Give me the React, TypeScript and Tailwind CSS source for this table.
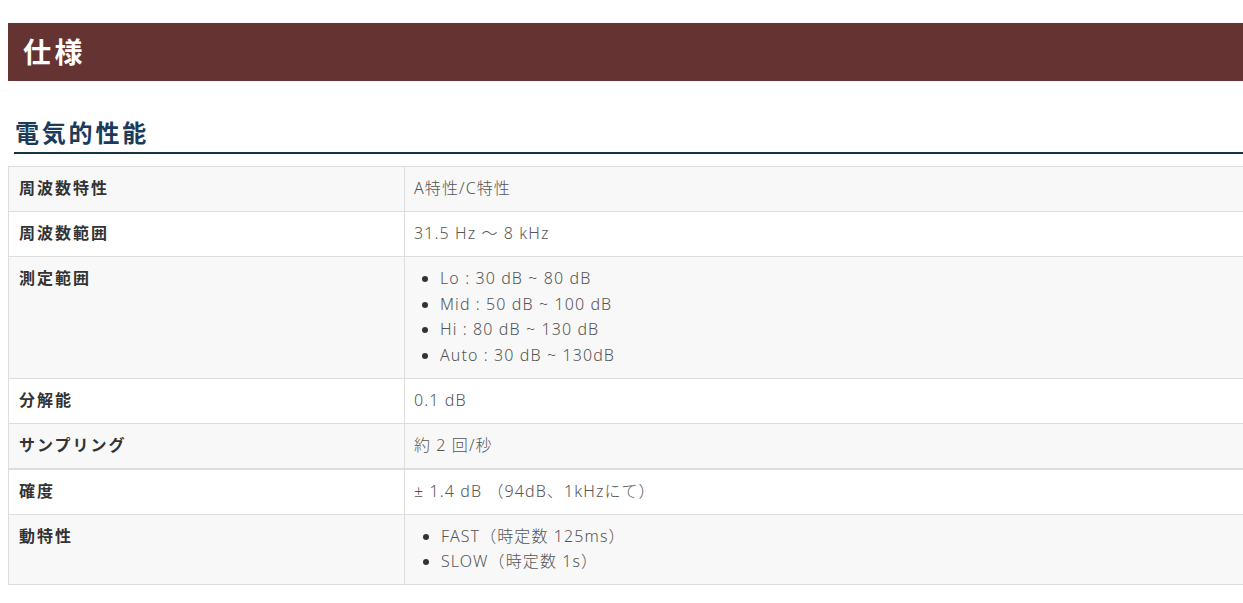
import React from 'react';

type Spec = { label: string; value: string | string[] };

const specs: Spec[] = [
  { label: '周波数特性', value: 'A特性/C特性' },
  { label: '周波数範囲', value: '31.5 Hz ～ 8 kHz' },
  {
    label: '測定範囲',
    value: ['Lo : 30 dB ~ 80 dB', 'Mid : 50 dB ~ 100 dB', 'Hi : 80 dB ~ 130 dB', 'Auto : 30 dB ~ 130dB'],
  },
  { label: '分解能', value: '0.1 dB' },
  { label: 'サンプリング', value: '約 2 回/秒' },
  { label: '確度', value: '± 1.4 dB （94dB、1kHzにて）' },
  { label: '動特性', value: ['FAST（時定数 125ms）', 'SLOW（時定数 1s）'] },
];

export default function App() {
  return (
    <div
      className="min-h-screen w-full overflow-hidden bg-white pt-[23px] pl-2"
      style={{ fontFamily: '"Noto Sans", "Noto Sans CJK JP", sans-serif' }}
    >
      <div className="w-[1260px]">
        {/* Page title bar */}
        <div className="h-[58px] bg-[#663333] pl-[15px] flex items-center">
          <h1 className="text-[28px] font-bold text-white tracking-[3.5px] leading-none">仕様</h1>
        </div>

        {/* Section heading */}
        <div className="mt-[36px] ml-[6px] border-b-2 border-[#163447] pb-[3px]">
          <h2 className="text-[24px] font-bold text-[#1b3b5a] tracking-[2.8px] leading-[32px] pl-px">電気的性能</h2>
        </div>

        {/* Spec table */}
        <table className="mt-[12px] w-full border-collapse text-[16px] leading-[25.6px]">
          <tbody>
            {specs.map((s, i) => (
              <tr
                key={s.label}
                className={`${i % 2 === 0 ? 'bg-[#f8f8f8]' : 'bg-white'} ${i === 5 ? 'border-t-2' : ''} border-[#dddddd]`}
              >
                <td className="w-[396px] align-top border border-[#dddddd] py-[9.2px] pl-[10px] pr-[10px] font-bold text-[#333333] tracking-[2px]">
                  {s.label}
                </td>
                <td className="align-top border border-[#dddddd] py-[9.2px] pl-[9px] pr-[10px] font-light text-[#555555] tracking-[1.1px]">
                  {Array.isArray(s.value) ? (
                    <ul className={`list-disc marker:text-[#333333] ${i === 6 ? 'pl-[27px]' : 'pl-[26px]'}`}>
                      {s.value.map((v) => (
                        <li key={v}>{v}</li>
                      ))}
                    </ul>
                  ) : (
                    s.value
                  )}
                </td>
              </tr>
            ))}
          </tbody>
        </table>
      </div>
    </div>
  );
}
